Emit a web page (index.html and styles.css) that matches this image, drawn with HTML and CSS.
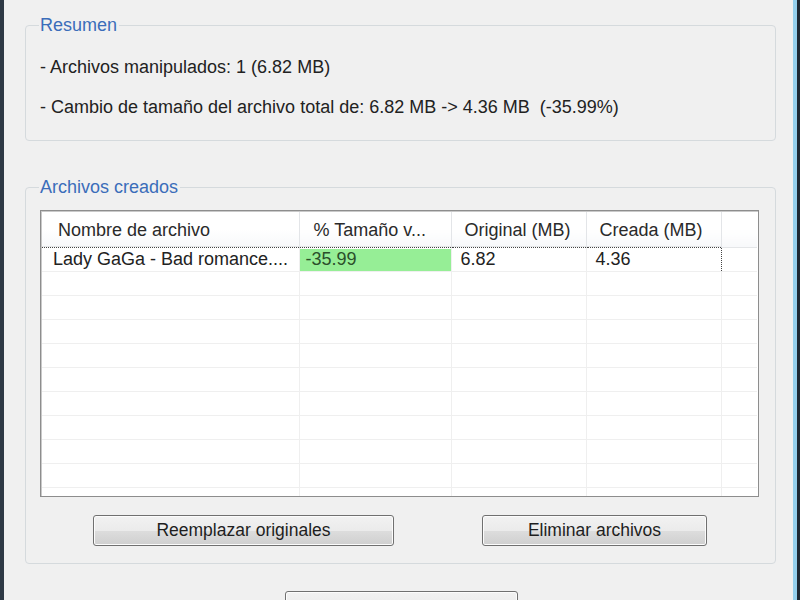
FILE: index.html
```html
<!DOCTYPE html>
<html lang="es">
<head>
    <meta charset="UTF-8">
    <title>Resultado</title>
    <link rel="stylesheet" href="styles.css">
</head>
<body>
    <div class="window">
        <fieldset class="group summary">
            <legend>Resumen</legend>
            <div class="summary-body">
                <div class="summary-line">- Archivos manipulados: 1 (6.82 MB)</div>
                <div class="summary-line">- Cambio de tamaño del archivo total de: 6.82 MB -&gt; 4.36 MB  (-35.99%)</div>
            </div>
        </fieldset>

        <fieldset class="group files">
            <legend>Archivos creados</legend>
            <div class="listview">
                <table class="file-table">
                    <colgroup>
                        <col class="w-name">
                        <col class="w-pct">
                        <col class="w-orig">
                        <col class="w-new">
                        <col class="w-fill">
                    </colgroup>
                    <tr class="head">
                        <th class="c-name">Nombre de archivo</th>
                        <th class="c-pct">% Tamaño v...</th>
                        <th class="c-orig">Original (MB)</th>
                        <th class="c-new">Creada (MB)</th>
                        <th class="c-fill"></th>
                    </tr>
                    <tr class="item focused">
                        <td class="c-name">Lady GaGa - Bad romance....</td>
                        <td class="c-pct good">-35.99</td>
                        <td class="c-orig">6.82</td>
                        <td class="c-new">4.36</td>
                        <td class="c-fill"></td>
                    </tr>
                    <tr class="item"><td></td><td></td><td></td><td></td><td></td></tr>
                    <tr class="item"><td></td><td></td><td></td><td></td><td></td></tr>
                    <tr class="item"><td></td><td></td><td></td><td></td><td></td></tr>
                    <tr class="item"><td></td><td></td><td></td><td></td><td></td></tr>
                    <tr class="item"><td></td><td></td><td></td><td></td><td></td></tr>
                    <tr class="item"><td></td><td></td><td></td><td></td><td></td></tr>
                    <tr class="item"><td></td><td></td><td></td><td></td><td></td></tr>
                    <tr class="item"><td></td><td></td><td></td><td></td><td></td></tr>
                    <tr class="item"><td></td><td></td><td></td><td></td><td></td></tr>
                    <tr class="item"><td></td><td></td><td></td><td></td><td></td></tr>
                </table>
            </div>
            <div class="actions">
                <button class="btn btn-replace">Reemplazar originales</button>
                <button class="btn btn-delete">Eliminar archivos</button>
            </div>
        </fieldset>

        <div class="bottom">
            <button class="btn btn-close"></button>
        </div>
    </div>
</body>
</html>
```

FILE: styles.css
```css
html, body {
    margin: 0;
    padding: 0;
    height: 600px;
    overflow: hidden;
}
body {
    background-color: #f0f0f0;
    font-family: "Liberation Sans", Arial, sans-serif;
    font-size: 18px;
    color: #222;
}
.window {
    box-sizing: border-box;
    height: 600px;
    border-left: 4px solid #2e3945;
    border-right: 3px solid #1d2833;
    box-shadow: inset -4px 0 0 #94cfec;
    padding: 15px 0 0 21px;
}
.group {
    margin: 0;
    width: 751px;
    box-sizing: border-box;
    padding: 0 14px 0 14px;
    border: 1px solid #d5dadd;
    border-radius: 4px;
}
.group legend {
    color: #3b6dba;
    padding: 0 2px 0 1px;
    margin-left: -1px;
    line-height: 20px;
}
.summary {
    height: 126px;
}
.summary-body {
    padding-top: 12px;
}
.summary-line {
    line-height: 40px;
    white-space: pre;
}
.files {
    margin-top: 36px;
    height: 387px;
}
.listview {
    margin-top: 13px;
    width: 716px;
    height: 284px;
    border: 1px solid #8d8d8d;
    box-shadow: inset 1px 1px 0 #c9c9c9;
    background-color: #fff;
    overflow: hidden;
    padding: 1px 0 0 1px;
}
.file-table {
    border-collapse: collapse;
    table-layout: fixed;
    width: 715px;
}
.w-name { width: 257px; }
.w-pct { width: 152px; }
.w-orig { width: 135px; }
.w-new { width: 135px; }
.w-fill { width: 36px; }
.file-table th, .file-table td {
    padding: 0;
    text-align: left;
    white-space: nowrap;
    overflow: hidden;
    font-weight: normal;
}
.head th {
    height: 33px;
    padding-top: 2px;
    background: linear-gradient(#ffffff, #ffffff 50%, #f7f8fa);
    border-right: 1px solid #e3e5e8;
    box-shadow: inset 0 -1px 0 #e4e6e8;
    color: #2a2a2a;
}
.head th.c-name { padding-left: 16px; }
.head th.c-pct { padding-left: 14px; }
.head th.c-orig { padding-left: 13px; }
.head th.c-new { padding-left: 13px; }
.head th.c-fill { border-right: none; }
.item td {
    height: 23px;
    border-right: 1px solid #efefef;
    border-bottom: 1px solid #efefef;
    line-height: 23px;
    vertical-align: top;
}
.item td:last-child {
    border-right: none;
}
.focused td {
    border-top: 1px dotted #444;
}
.focused td:first-child {
    padding-left: 11px;
}
.focused td.c-new {
    border-right: 1px dotted #444;
}
.focused td.c-fill {
    border-top: none;
}
.focused td.c-pct {
    padding-left: 6px;
}
.focused td.c-orig, .focused td.c-new {
    padding-left: 9px;
}
.good {
    background-color: #96ee96;
    color: #2b4f2b;
    box-shadow: inset 0 1px 0 #fff;
}
.actions {
    display: flex;
    padding: 18px 0 0 53px;
    gap: 88px;
}
.btn {
    font-family: "Liberation Sans", Arial, sans-serif;
    font-size: 17.5px;
    color: #1e1e1e;
    height: 31px;
    border: 1px solid #707070;
    border-radius: 3px;
    background: linear-gradient(#f2f2f2, #ebebeb 50%, #dddddd 51%, #cfcfcf);
    box-shadow: inset 0 0 0 1px #fcfcfc;
    padding: 0;
}
.btn-replace { width: 301px; }
.btn-delete { width: 225px; }
.bottom {
    padding: 27px 0 0 260px;
}
.btn-close {
    width: 233px;
}
```
